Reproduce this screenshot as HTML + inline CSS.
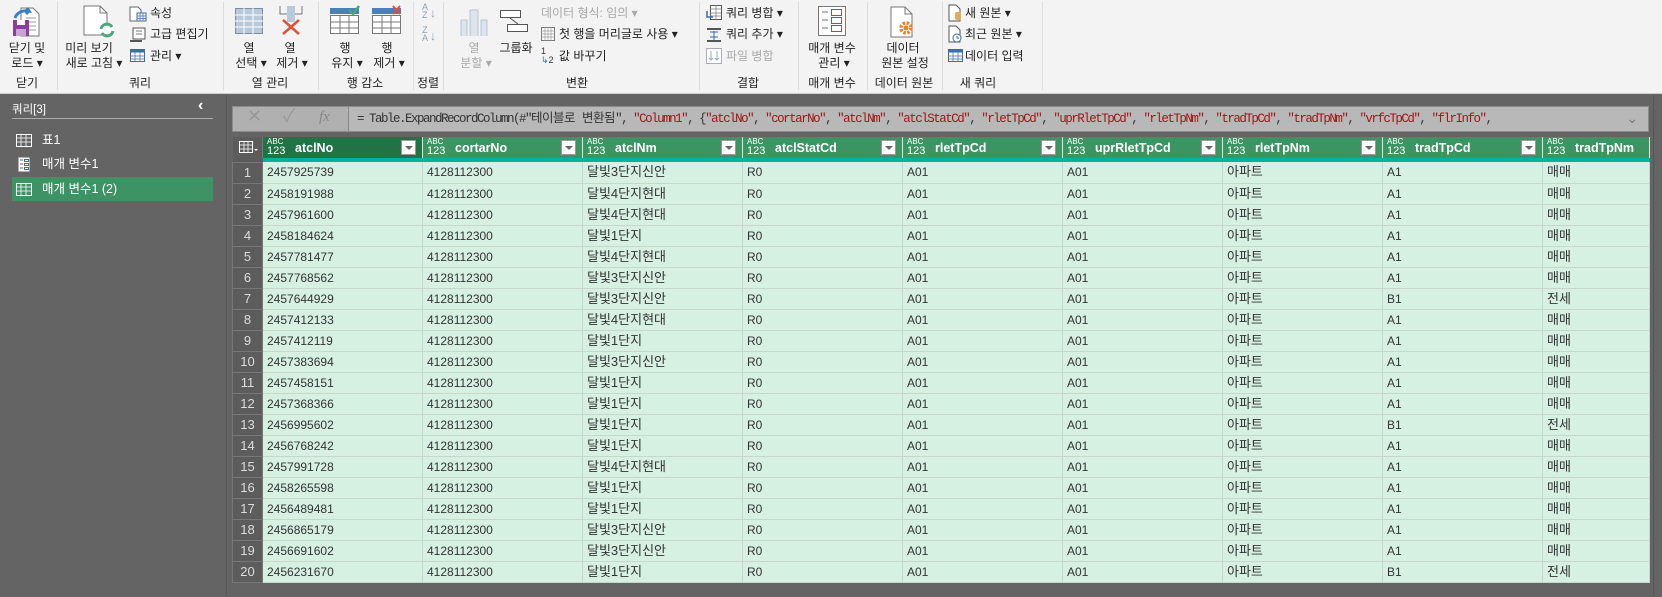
<!DOCTYPE html>
<html><head><meta charset="utf-8"><style>
*{margin:0;padding:0;box-sizing:border-box}
body{width:1662px;height:597px;overflow:hidden;background:#646464;font-family:"Liberation Sans","Noto Sans CJK KR",sans-serif;font-size:12px;color:#222;position:relative}
#rib{position:absolute;left:0;top:0;width:1662px;height:94px;background:#f3f3f3;border-bottom:1px solid #d0d0d0}
.t{position:absolute;white-space:nowrap;line-height:14px}
.c{text-align:center;transform:translateX(-50%)}
.g{color:#a8a8a8}
.sep{position:absolute;top:2px;width:1px;height:88px;background:#dcdcdc}
.lbl{position:absolute;top:76px;white-space:nowrap;transform:translateX(-50%);line-height:14px}
svg{position:absolute}
#lp{position:absolute;left:0;top:95px;width:227px;height:502px;background:#646464;border-right:1px solid #555}
.q{position:absolute;left:12px;width:201px;height:24px;color:#fff;line-height:24px;padding-left:30px;font-size:12.5px}
#fb{position:absolute;left:232px;top:106px;width:1417px;height:26px;background:#b0b0b0;border:1px solid #8a8a8a}
#fbt{position:absolute;left:115px;top:0;right:0;height:24px;background:#b8b8b8;border-left:1px solid #8a8a8a;font-family:"Liberation Mono","Noto Sans CJK KR",monospace;font-size:12.5px;letter-spacing:-1.5px;line-height:24px;padding-left:8px;white-space:nowrap;overflow:hidden;color:#333}
.s{color:#a31515}
.kk{letter-spacing:-0.5px}
table{position:absolute;left:232px;top:137px;border-collapse:collapse;table-layout:fixed;width:1417px}
th{background:#3d9463;color:#fff;height:21px;text-align:left;font-weight:bold;font-size:12.5px;border-right:1px solid #e0e0e0;position:relative;padding-left:32px;white-space:nowrap;overflow:hidden}
th.sel{background:#217346}
th .ty{position:absolute;left:4px;top:1px;font-size:8px;line-height:8px;font-weight:normal}
th .ty b{font-size:11px;font-weight:normal;display:block;line-height:11px}
th .dd{position:absolute;right:6px;top:3px;width:15px;height:15px;background:#fff;border:1px solid #999}
th .dd:after{content:"";position:absolute;left:3px;top:5px;border:4px solid transparent;border-top:4px solid #666}
th.rn{background:#5c5c5c;padding:0;border-right:1px solid #777}
tr.tl td{height:4px;background:#00b2a0;padding:0;border:none}
tr.tl td.rn{background:#5c5c5c}
td{background:#d6f0e2;height:21px;border:1px solid #c9d6cf;border-top:none;padding-left:4px;font-size:12px;color:#333;white-space:nowrap;overflow:hidden;line-height:20px}
td.rn{background:#5c5c5c;color:#ddd;text-align:center;padding:0;border:1px solid #777;font-size:13px}
td.k{font-size:13px}
</style></head><body>
<div id="rib">
<svg style="left:9px;top:6px" width="32" height="32" viewBox="0 0 32 32"><path d="M12 2h12l6 6v22H12z" fill="#fff" stroke="#777"/><path d="M17 12h10M17 16h10M17 20h10M17 24h10" stroke="#999"/><path d="M4 14h16v16H4z" fill="#8a3f9e"/><rect x="8" y="14" width="8" height="5" fill="#fff"/><rect x="7" y="23" width="10" height="7" fill="#c9a3d4"/><path d="M6 12c2-6 8-8 14-7l-2-3M20 5l-3 3" stroke="#3a7fc1" stroke-width="3" fill="none"/></svg>
<div class="t c" style="left:27px;top:41px">닫기 및</div><div class="t c" style="left:27px;top:56px">로드 ▾</div>
<div class="lbl" style="left:27px">닫기</div>
<div class="sep" style="left:57px"></div>
<svg style="left:82px;top:4px" width="34" height="34" viewBox="0 0 34 34"><path d="M2 2h16l7 7v22H2z" fill="#fff" stroke="#777"/><path d="M18 2v7h7" fill="none" stroke="#777"/><circle cx="25" cy="26" r="7" fill="#fff"/><path d="M19 25a6 6 0 0 1 11-2M31 27a6 6 0 0 1-11 2" stroke="#4ca57c" stroke-width="3" fill="none"/></svg>
<div class="t c" style="left:89px;top:41px">미리 보기</div><div class="t c" style="left:94px;top:56px">새로 고침 ▾</div>
<svg style="left:129px;top:6px" width="18" height="16" viewBox="0 0 18 16"><path d="M1 1h8l3 3v11H1z" fill="#fff" stroke="#666"/><rect x="8" y="7" width="9" height="8" fill="#fff" stroke="#3a6ea5"/><path d="M8 10h9M8 12.5h9M11 7v8M14 7v8" stroke="#3a6ea5" stroke-width=".7"/></svg>
<div class="t" style="left:150px;top:6px">속성</div>
<svg style="left:129px;top:27px" width="18" height="16" viewBox="0 0 18 16"><path d="M4 1h12v11H4z" fill="#fff" stroke="#555"/><path d="M1 13h12v2H1z" fill="#555"/><path d="M7 4h6M7 7h6" stroke="#777"/></svg>
<div class="t" style="left:150px;top:27px">고급 편집기</div>
<svg style="left:130px;top:49px" width="15" height="13" viewBox="0 0 15 13"><rect x=".5" y=".5" width="14" height="12" fill="#fff" stroke="#3a6ea5"/><rect x=".5" y=".5" width="14" height="3" fill="#3a6ea5"/><path d="M0 7h15M0 10h15M5 3v10M10 3v10" stroke="#3a6ea5" stroke-width=".7"/></svg>
<div class="t" style="left:150px;top:49px">관리 ▾</div>
<div class="lbl" style="left:140px">쿼리</div>
<div class="sep" style="left:223px"></div>
<svg style="left:235px;top:8px" width="28" height="26" viewBox="0 0 28 26"><rect x=".5" y=".5" width="27" height="25" fill="#b8c9dc" stroke="#7a8ea5"/><path d="M0 7h28M0 13h28M0 19h28M9 0v26M18 0v26" stroke="#fff"/></svg>
<div class="t c" style="left:249px;top:41px">열</div><div class="t c" style="left:251px;top:56px">선택 ▾</div>
<svg style="left:279px;top:6px" width="24" height="30" viewBox="0 0 24 30"><path d="M1 0v8h22V0" fill="none" stroke="#777"/><rect x="8" y="0" width="8" height="16" fill="#b8c9dc"/><path d="M4 14l16 14M20 14L4 28" stroke="#e0523a" stroke-width="2.5"/></svg>
<div class="t c" style="left:290px;top:41px">열</div><div class="t c" style="left:292px;top:56px">제거 ▾</div>
<div class="lbl" style="left:270px">열 관리</div>
<div class="sep" style="left:318px"></div>
<svg style="left:330px;top:5px" width="30" height="30" viewBox="0 0 30 30"><rect x="0" y="3" width="29" height="6" fill="#4a7fb8"/><rect x=".5" y="10.5" width="28" height="18" fill="#fff" stroke="#777"/><path d="M0 17h29M0 23h29M10 10v19M19 10v19" stroke="#777"/><path d="M19 5l4 4 6-8" stroke="#4ca57c" stroke-width="2.5" fill="none"/></svg>
<div class="t c" style="left:345px;top:41px">행</div><div class="t c" style="left:347px;top:56px">유지 ▾</div>
<svg style="left:372px;top:5px" width="30" height="30" viewBox="0 0 30 30"><rect x="0" y="3" width="29" height="6" fill="#4a7fb8"/><rect x=".5" y="10.5" width="28" height="18" fill="#fff" stroke="#777"/><path d="M0 17h29M0 23h29M10 10v19M19 10v19" stroke="#777"/><path d="M21 1l7 8M28 1l-7 8" stroke="#e0523a" stroke-width="2"/></svg>
<div class="t c" style="left:387px;top:41px">행</div><div class="t c" style="left:389px;top:56px">제거 ▾</div>
<div class="lbl" style="left:365px">행 감소</div>
<div class="sep" style="left:413px"></div>
<div class="t g" style="left:422px;top:3px;font-size:9px;line-height:8px;color:#8aa0b8">A<br>Z</div><div class="t" style="left:430px;top:6px;color:#8aa0b8">↓</div>
<div class="t g" style="left:422px;top:26px;font-size:9px;line-height:8px;color:#8aa0b8">Z<br>A</div><div class="t" style="left:430px;top:29px;color:#8aa0b8">↓</div>
<div class="lbl" style="left:428px">정렬</div>
<div class="sep" style="left:443px"></div>
<svg style="left:459px;top:6px" width="30" height="30" viewBox="0 0 30 30"><path d="M2 30V14h6v16M11 30V4h8v26M22 30V14h6v16" fill="#dde4ee" stroke="#b8c4d4"/></svg>
<div class="t c g" style="left:474px;top:41px">열</div><div class="t c g" style="left:476px;top:56px">분할 ▾</div>
<svg style="left:500px;top:10px" width="28" height="22" viewBox="0 0 28 22"><rect x=".5" y=".5" width="20" height="7" fill="#fff" stroke="#555"/><rect x="7.5" y="14.5" width="20" height="7" fill="#fff" stroke="#555"/><path d="M10 8l8 6" stroke="#555"/></svg>
<div class="t c" style="left:516px;top:41px">그룹화</div>
<div class="t g" style="left:541px;top:6px">데이터 형식: 임의 ▾</div>
<svg style="left:541px;top:27px" width="14" height="14" viewBox="0 0 14 14"><rect x=".5" y=".5" width="13" height="13" fill="#fff" stroke="#777"/><path d="M0 4h14M0 7h14M0 10h14M4 0v14M7 0v14M10 0v14" stroke="#999" stroke-width=".7"/></svg>
<div class="t" style="left:559px;top:27px">첫 행을 머리글로 사용 ▾</div>
<div class="t" style="left:541px;top:47px;font-size:9px;color:#333;line-height:9px">1<br><span style="color:#3a6ea5">↳</span>2</div>
<div class="t" style="left:559px;top:49px">값 바꾸기</div>
<div class="lbl" style="left:577px">변환</div>
<div class="sep" style="left:699px"></div>
<svg style="left:706px;top:5px" width="16" height="16" viewBox="0 0 16 16"><rect x="4.5" y=".5" width="11" height="14" fill="#fff" stroke="#555"/><path d="M4 4h12M4 8h12M4 11h12M10 0v15" stroke="#777" stroke-width=".7"/><path d="M1 6v6h6" stroke="#3a6ea5" stroke-width="1.5" fill="none"/></svg>
<div class="t" style="left:726px;top:6px">쿼리 병합 ▾</div>
<svg style="left:706px;top:27px" width="16" height="16" viewBox="0 0 16 16"><path d="M1 2h14M1 14h14" stroke="#555" stroke-width="2"/><path d="M4 5h8M4 10h8M8 4v9" stroke="#3a6ea5"/></svg>
<div class="t" style="left:726px;top:27px">쿼리 추가 ▾</div>
<svg style="left:706px;top:48px" width="16" height="16" viewBox="0 0 16 16"><rect x=".5" y=".5" width="15" height="15" fill="#fff" stroke="#aab"/><path d="M5 3v9M11 3v9M3 10l2 2 2-2M9 10l2 2 2-2" stroke="#9aaabb" fill="none"/></svg>
<div class="t g" style="left:726px;top:49px">파일 병합</div>
<div class="lbl" style="left:748px">결합</div>
<div class="sep" style="left:798px"></div>
<svg style="left:818px;top:6px" width="28" height="30" viewBox="0 0 28 30"><rect x=".5" y=".5" width="27" height="29" fill="#fff" stroke="#777"/><path d="M4 6h6M4 14h6M4 22h6" stroke="#777"/><rect x="13.5" y="3.5" width="10" height="6" fill="none" stroke="#3a6ea5"/><rect x="13.5" y="11.5" width="10" height="6" fill="none" stroke="#3a6ea5"/><rect x="13.5" y="19.5" width="10" height="6" fill="none" stroke="#3a6ea5"/></svg>
<div class="t c" style="left:832px;top:41px">매개 변수</div><div class="t c" style="left:834px;top:56px">관리 ▾</div>
<div class="lbl" style="left:832px">매개 변수</div>
<div class="sep" style="left:867px"></div>
<svg style="left:890px;top:6px" width="28" height="32" viewBox="0 0 28 32"><path d="M1 1h14l7 7v23H1z" fill="#fff" stroke="#777"/><path d="M15 1v7h7" fill="none" stroke="#777"/><circle cx="16" cy="22" r="5" fill="none" stroke="#e8822a" stroke-width="3.5" stroke-dasharray="2.5 1.5"/><circle cx="16" cy="22" r="2.5" fill="#e8822a"/></svg>
<div class="t c" style="left:903px;top:41px">데이터</div><div class="t c" style="left:905px;top:56px">원본 설정</div>
<div class="lbl" style="left:904px">데이터 원본</div>
<div class="sep" style="left:942px"></div>
<svg style="left:948px;top:4px" width="14" height="18" viewBox="0 0 14 18"><path d="M1 1h7l4 4v12H1z" fill="#fff" stroke="#555"/><rect x="7" y="8" width="6" height="8" rx="2" fill="#e8a85a"/></svg>
<div class="t" style="left:965px;top:6px">새 원본 ▾</div>
<svg style="left:948px;top:25px" width="14" height="18" viewBox="0 0 14 18"><path d="M1 1h7l4 4v12H1z" fill="#fff" stroke="#555"/><circle cx="9" cy="13" r="4" fill="#fff" stroke="#3a6ea5"/><path d="M9 11v2h2" stroke="#3a6ea5" fill="none"/></svg>
<div class="t" style="left:965px;top:27px">최근 원본 ▾</div>
<svg style="left:948px;top:49px" width="15" height="13" viewBox="0 0 15 13"><rect x=".5" y=".5" width="14" height="12" fill="#fff" stroke="#3a6ea5"/><rect x=".5" y=".5" width="14" height="3" fill="#3a6ea5"/><path d="M0 7h15M0 10h15M5 3v10M10 3v10" stroke="#3a6ea5" stroke-width=".7"/></svg>
<div class="t" style="left:965px;top:49px">데이터 입력</div>
<div class="lbl" style="left:978px">새 쿼리</div>
<div class="sep" style="left:1042px"></div>
</div>

<div id="lp">
<div class="t" style="left:12px;top:8px;color:#fff;font-size:11.5px">쿼리[3]</div>
<div class="t" style="left:198px;top:4px;color:#fff;font-size:16px;font-weight:bold">‹</div>
<div style="position:absolute;left:12px;top:23px;width:201px;height:1px;background:#aaa"></div>
<div class="q" style="top:33px">표1</div>
<svg style="left:16px;top:39px" width="16" height="13" viewBox="0 0 16 13"><rect x=".5" y=".5" width="15" height="12" fill="none" stroke="#fff"/><path d="M0 4h16M0 8h16M5 0v13M10 0v13" stroke="#fff" stroke-width=".8"/></svg>
<div class="q" style="top:57px">매개 변수1 (https://m.land.nav...</div>
<svg style="left:18px;top:62px" width="12" height="15" viewBox="0 0 12 15"><rect x=".5" y=".5" width="11" height="14" fill="#fff"/><path d="M2 3h3M2 7h3M2 11h3M6.5 2.5h4v2h-4zM6.5 6.5h4v2h-4zM6.5 10.5h4v2h-4z" stroke="#3a6ea5" fill="none"/></svg>
<div class="q" style="top:82px;background:#3e9364">매개 변수1 (2)</div>
<svg style="left:16px;top:88px" width="16" height="13" viewBox="0 0 16 13"><rect x=".5" y=".5" width="15" height="12" fill="none" stroke="#fff"/><path d="M0 4h16M0 8h16M5 0v13M10 0v13" stroke="#fff" stroke-width=".8"/></svg>
</div>

<div id="fb">
<div class="t" style="left:14px;top:2px;color:#999;font-size:18px">✕</div>
<div class="t" style="left:50px;top:2px;color:#999;font-size:18px">✓</div>
<div class="t" style="left:86px;top:3px;color:#888;font-size:15px;font-style:italic;font-family:'Liberation Serif',serif">fx</div>
<div id="fbt">= Table.ExpandRecordColumn(#"<span class="kk">테이블로 변환됨</span>", <span class="s">"Column1"</span>, {<span class="s">"atclNo"</span>, <span class="s">"cortarNo"</span>, <span class="s">"atclNm"</span>, <span class="s">"atclStatCd"</span>, <span class="s">"rletTpCd"</span>, <span class="s">"uprRletTpCd"</span>, <span class="s">"rletTpNm"</span>, <span class="s">"tradTpCd"</span>, <span class="s">"tradTpNm"</span>, <span class="s">"vrfcTpCd"</span>, <span class="s">"flrInfo"</span>,</div>
<div class="t" style="right:10px;top:4px;color:#777;font-size:14px;background:#b8b8b8;padding-left:4px">⌄</div>
</div>
<div style="position:absolute;left:1653px;top:95px;width:1px;height:502px;background:#555"></div>

<table>
<colgroup><col style="width:30px"><col style="width:160px"><col style="width:160px"><col style="width:160px"><col style="width:160px"><col style="width:160px"><col style="width:160px"><col style="width:160px"><col style="width:160px"><col style="width:107px"></colgroup>
<tr><th class="rn"><svg style="left:6px;top:4px" width="20" height="13" viewBox="0 0 20 13"><rect x=".5" y=".5" width="13" height="11" fill="none" stroke="#fff"/><path d="M0 4h14M0 8h14M5 0v12M9 0v12" stroke="#fff" stroke-width=".8"/><path d="M15 8h4l-2 2z" fill="#fff"/></svg></th>
<th class="sel"><span class="ty">ABC<b>123</b></span>atclNo<span class="dd"></span></th>
<th><span class="ty">ABC<b>123</b></span>cortarNo<span class="dd"></span></th>
<th><span class="ty">ABC<b>123</b></span>atclNm<span class="dd"></span></th>
<th><span class="ty">ABC<b>123</b></span>atclStatCd<span class="dd"></span></th>
<th><span class="ty">ABC<b>123</b></span>rletTpCd<span class="dd"></span></th>
<th><span class="ty">ABC<b>123</b></span>uprRletTpCd<span class="dd"></span></th>
<th><span class="ty">ABC<b>123</b></span>rletTpNm<span class="dd"></span></th>
<th><span class="ty">ABC<b>123</b></span>tradTpCd<span class="dd"></span></th>
<th><span class="ty">ABC<b>123</b></span>tradTpNm</th></tr>
<tr class="tl"><td class="rn"></td><td></td><td></td><td></td><td></td><td></td><td></td><td></td><td></td><td></td></tr>
<tr><td class="rn">1</td><td>2457925739</td><td>4128112300</td><td class="k">달빛3단지신안</td><td>R0</td><td>A01</td><td>A01</td><td class="k">아파트</td><td>A1</td><td class="k">매매</td></tr>
<tr><td class="rn">2</td><td>2458191988</td><td>4128112300</td><td class="k">달빛4단지현대</td><td>R0</td><td>A01</td><td>A01</td><td class="k">아파트</td><td>A1</td><td class="k">매매</td></tr>
<tr><td class="rn">3</td><td>2457961600</td><td>4128112300</td><td class="k">달빛4단지현대</td><td>R0</td><td>A01</td><td>A01</td><td class="k">아파트</td><td>A1</td><td class="k">매매</td></tr>
<tr><td class="rn">4</td><td>2458184624</td><td>4128112300</td><td class="k">달빛1단지</td><td>R0</td><td>A01</td><td>A01</td><td class="k">아파트</td><td>A1</td><td class="k">매매</td></tr>
<tr><td class="rn">5</td><td>2457781477</td><td>4128112300</td><td class="k">달빛4단지현대</td><td>R0</td><td>A01</td><td>A01</td><td class="k">아파트</td><td>A1</td><td class="k">매매</td></tr>
<tr><td class="rn">6</td><td>2457768562</td><td>4128112300</td><td class="k">달빛3단지신안</td><td>R0</td><td>A01</td><td>A01</td><td class="k">아파트</td><td>A1</td><td class="k">매매</td></tr>
<tr><td class="rn">7</td><td>2457644929</td><td>4128112300</td><td class="k">달빛3단지신안</td><td>R0</td><td>A01</td><td>A01</td><td class="k">아파트</td><td>B1</td><td class="k">전세</td></tr>
<tr><td class="rn">8</td><td>2457412133</td><td>4128112300</td><td class="k">달빛4단지현대</td><td>R0</td><td>A01</td><td>A01</td><td class="k">아파트</td><td>A1</td><td class="k">매매</td></tr>
<tr><td class="rn">9</td><td>2457412119</td><td>4128112300</td><td class="k">달빛1단지</td><td>R0</td><td>A01</td><td>A01</td><td class="k">아파트</td><td>A1</td><td class="k">매매</td></tr>
<tr><td class="rn">10</td><td>2457383694</td><td>4128112300</td><td class="k">달빛3단지신안</td><td>R0</td><td>A01</td><td>A01</td><td class="k">아파트</td><td>A1</td><td class="k">매매</td></tr>
<tr><td class="rn">11</td><td>2457458151</td><td>4128112300</td><td class="k">달빛1단지</td><td>R0</td><td>A01</td><td>A01</td><td class="k">아파트</td><td>A1</td><td class="k">매매</td></tr>
<tr><td class="rn">12</td><td>2457368366</td><td>4128112300</td><td class="k">달빛1단지</td><td>R0</td><td>A01</td><td>A01</td><td class="k">아파트</td><td>A1</td><td class="k">매매</td></tr>
<tr><td class="rn">13</td><td>2456995602</td><td>4128112300</td><td class="k">달빛1단지</td><td>R0</td><td>A01</td><td>A01</td><td class="k">아파트</td><td>B1</td><td class="k">전세</td></tr>
<tr><td class="rn">14</td><td>2456768242</td><td>4128112300</td><td class="k">달빛1단지</td><td>R0</td><td>A01</td><td>A01</td><td class="k">아파트</td><td>A1</td><td class="k">매매</td></tr>
<tr><td class="rn">15</td><td>2457991728</td><td>4128112300</td><td class="k">달빛4단지현대</td><td>R0</td><td>A01</td><td>A01</td><td class="k">아파트</td><td>A1</td><td class="k">매매</td></tr>
<tr><td class="rn">16</td><td>2458265598</td><td>4128112300</td><td class="k">달빛1단지</td><td>R0</td><td>A01</td><td>A01</td><td class="k">아파트</td><td>A1</td><td class="k">매매</td></tr>
<tr><td class="rn">17</td><td>2456489481</td><td>4128112300</td><td class="k">달빛1단지</td><td>R0</td><td>A01</td><td>A01</td><td class="k">아파트</td><td>A1</td><td class="k">매매</td></tr>
<tr><td class="rn">18</td><td>2456865179</td><td>4128112300</td><td class="k">달빛3단지신안</td><td>R0</td><td>A01</td><td>A01</td><td class="k">아파트</td><td>A1</td><td class="k">매매</td></tr>
<tr><td class="rn">19</td><td>2456691602</td><td>4128112300</td><td class="k">달빛3단지신안</td><td>R0</td><td>A01</td><td>A01</td><td class="k">아파트</td><td>A1</td><td class="k">매매</td></tr>
<tr><td class="rn">20</td><td>2456231670</td><td>4128112300</td><td class="k">달빛1단지</td><td>R0</td><td>A01</td><td>A01</td><td class="k">아파트</td><td>B1</td><td class="k">전세</td></tr>
</table>
</body></html>
